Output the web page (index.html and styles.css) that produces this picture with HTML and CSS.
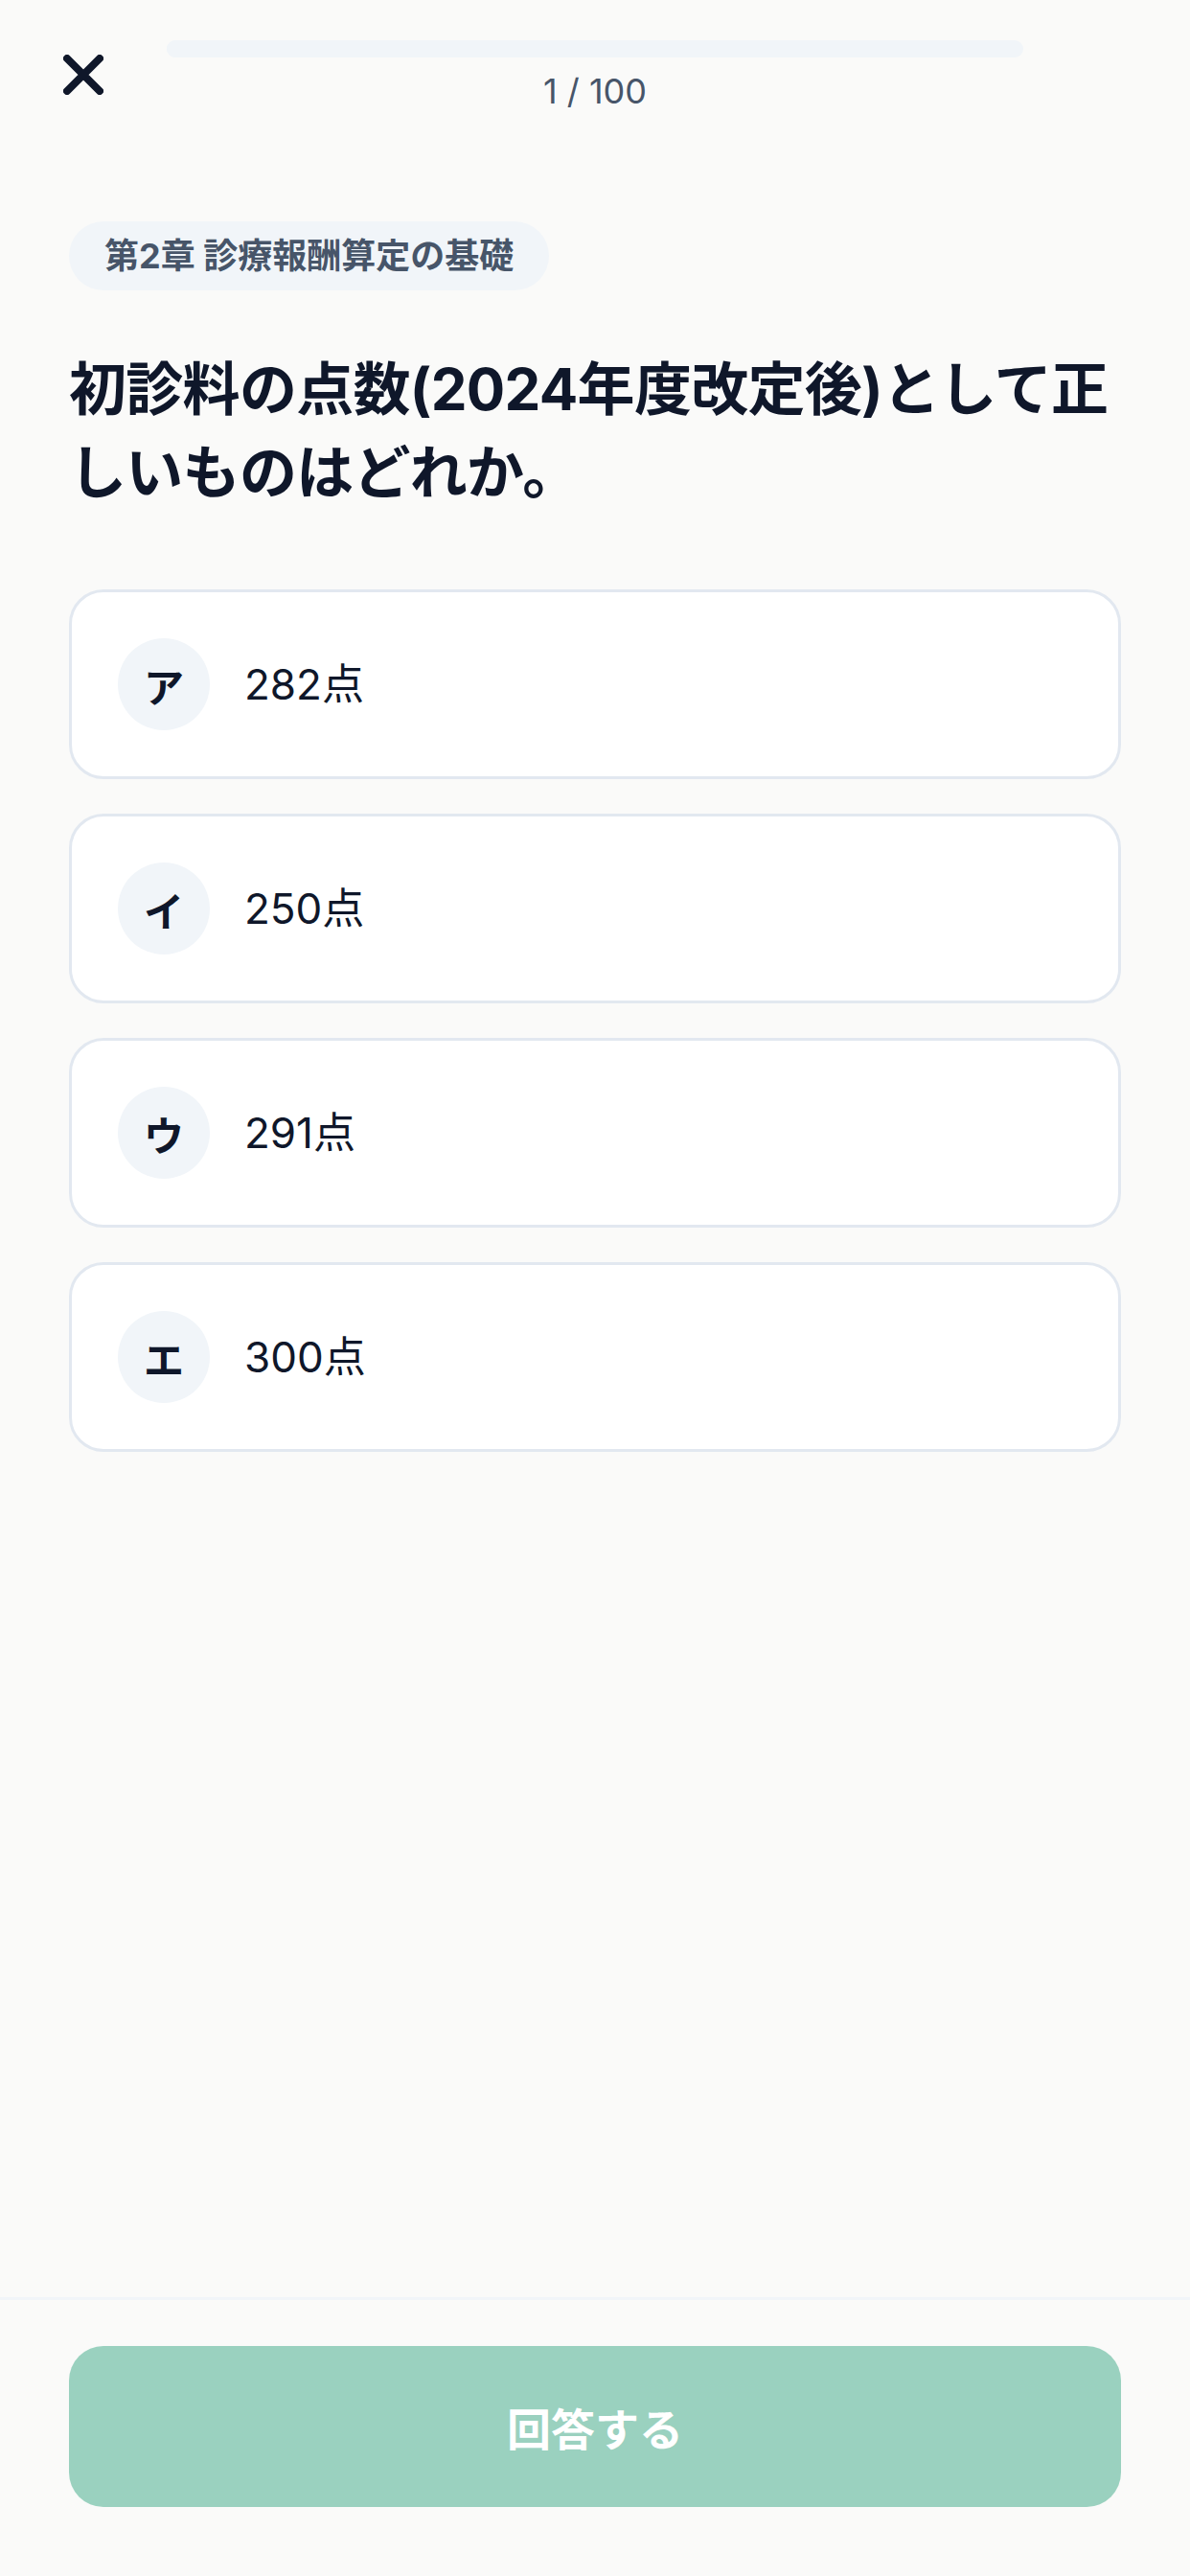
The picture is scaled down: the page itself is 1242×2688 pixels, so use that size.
FILE: index.html
```html
<!DOCTYPE html>
<html lang="ja">
<head>
    <meta charset="UTF-8">
    <meta name="viewport" content="width=device-width, initial-scale=1.0">
    <title>問題 1 / 100</title>
    <link rel="stylesheet" href="styles.css">
</head>
<body>
    <div class="screen">
        <header class="quiz-header">
            <button class="close-btn" aria-label="閉じる">
                <svg viewBox="0 0 42 42" width="42" height="42">
                    <path d="M4 4 L38 38 M38 4 L4 38" stroke="#0f172a" stroke-width="8" stroke-linecap="round" fill="none"/>
                </svg>
            </button>
            <div class="progress">
                <div class="progress-track">
                    <div class="progress-fill" style="width: 1%"></div>
                </div>
                <p class="progress-count">1 / 100</p>
            </div>
        </header>

        <main class="quiz-body">
            <span class="chapter-tag">第2章 診療報酬算定の基礎</span>
            <h1 class="question">初診料の点数(2024年度改定後)として正しいものはどれか。</h1>

            <ul class="options">
                <li class="option">
                    <span class="option-mark">ア</span>
                    <span class="option-text">282点</span>
                </li>
                <li class="option">
                    <span class="option-mark">イ</span>
                    <span class="option-text">250点</span>
                </li>
                <li class="option">
                    <span class="option-mark">ウ</span>
                    <span class="option-text">291点</span>
                </li>
                <li class="option">
                    <span class="option-mark">エ</span>
                    <span class="option-text">300点</span>
                </li>
            </ul>
        </main>

        <footer class="quiz-footer">
            <button class="answer-btn" disabled>回答する</button>
        </footer>
    </div>
</body>
</html>
```

FILE: styles.css
```css
body {
    margin: 0;
    padding: 0;
    background-color: #fafaf9;
    color: #0f172a;
    font-family: Inter, "Noto Sans CJK JP", sans-serif;
}
.screen {
    display: flex;
    flex-direction: column;
    min-height: 2688px;
}
.quiz-header {
    display: grid;
    grid-template-columns: 174px 1fr 174px;
    padding-top: 42px;
}
.close-btn {
    margin: 15px 0 0 66px;
    padding: 0;
    width: 42px;
    height: 42px;
    border: none;
    background: none;
    cursor: pointer;
}
.close-btn svg {
    display: block;
}
.progress-track {
    height: 18px;
    border-radius: 9px;
    background-color: #f1f5f9;
    overflow: hidden;
}
.progress-fill {
    height: 100%;
    background-color: #f1f5f9;
}
.progress-count {
    margin: 13px 0 0;
    font-size: 36px;
    line-height: 44px;
    color: #475569;
    text-align: center;
}
.quiz-body {
    flex: 1;
    padding: 114px 72px 0;
}
.chapter-tag {
    display: inline-block;
    padding: 0 37px;
    height: 72px;
    line-height: 72px;
    border-radius: 36px;
    background-color: #f1f5f9;
    color: #475569;
    font-size: 36px;
    font-weight: 700;
}
.question {
    margin: 60px 0 78px;
    font-size: 60px;
    font-weight: 700;
    line-height: 87px;
    letter-spacing: -0.7px;
    color: #0f172a;
}
.options {
    list-style: none;
    margin: 0;
    padding: 0;
    display: flex;
    flex-direction: column;
    gap: 36px;
}
.option {
    display: flex;
    align-items: center;
    gap: 36px;
    padding: 48px;
    border: 3px solid #e2e8f0;
    border-radius: 36px;
    background-color: white;
}
.option-mark {
    display: flex;
    align-items: center;
    justify-content: center;
    width: 96px;
    height: 96px;
    border-radius: 50%;
    background-color: #f1f5f9;
    font-size: 42px;
    font-weight: 700;
}
.option-text {
    font-size: 44px;
    line-height: 1;
}
.quiz-footer {
    border-top: 3px solid #f1f5f9;
    padding: 48px 72px 72px;
}
.answer-btn {
    display: block;
    width: 100%;
    height: 168px;
    border: none;
    border-radius: 36px;
    background-color: #9ad1bf;
    color: white;
    font-family: inherit;
    font-size: 46px;
    font-weight: 700;
}
```
